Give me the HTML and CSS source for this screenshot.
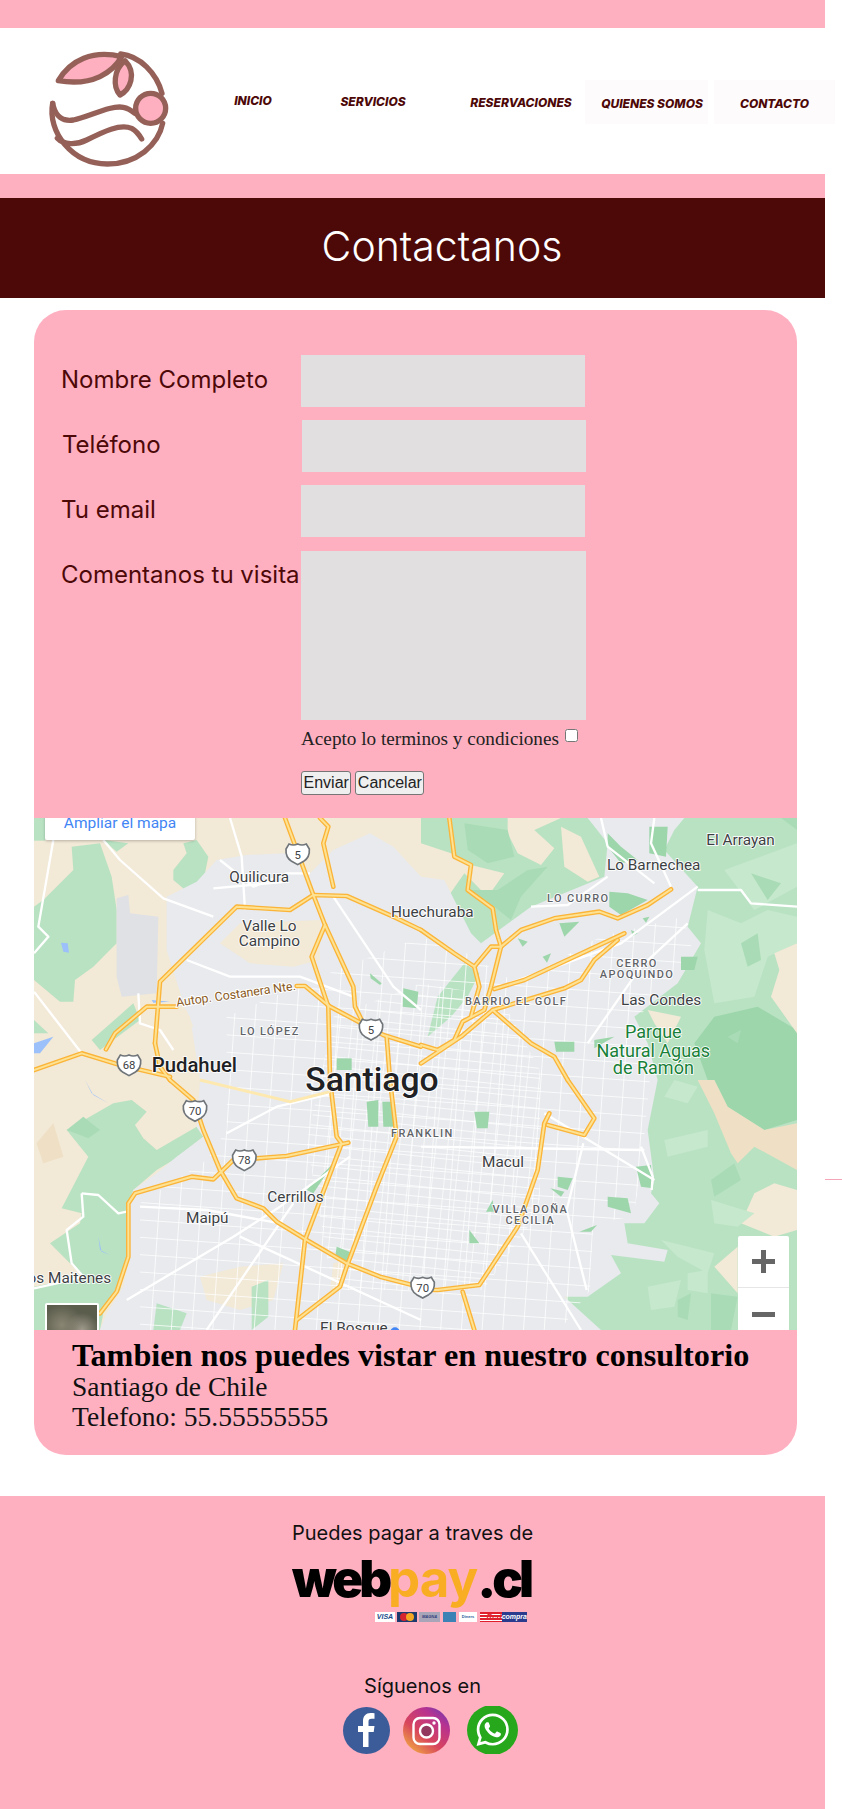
FILE: index.html
```html
<!DOCTYPE html>
<html>
<head>
    <title>Contactanos</title>
    <link rel="stylesheet" href="styles.css">
</head>
<body>
    <div class="page">
        <div class="band-top"></div>

        <header class="site-header">
            <svg class="logo" viewBox="0 0 480 450">
                <g fill="none" stroke="#956058" stroke-width="16" stroke-linecap="round" stroke-linejoin="round">
                    <path d="M68 220C52 305 125 402 232 402C320 402 385 345 398 280"/>
                    <path d="M272 72C330 78 380 130 396 190"/>
                    <path d="M85 152C120 90 190 58 275 80C250 125 190 170 85 152Z" fill="#feb0c1"/>
                    <path d="M285 92C250 120 248 170 270 195C300 180 322 130 285 92Z" fill="#feb0c1"/>
                    <path d="M68 220C75 260 100 275 130 270C180 260 240 225 280 232C295 235 305 242 315 250"/>
                    <path d="M82 325C100 345 140 345 170 330C220 305 270 280 305 295C320 303 328 315 335 327"/>
                    <circle cx="362" cy="235" r="45" fill="#feb0c1"/>
                </g>
            </svg>
            <nav class="main-nav">
                <a class="nav-link nav-inicio" href="#">INICIO</a>
                <a class="nav-link nav-servicios" href="#">SERVICIOS</a>
                <a class="nav-link nav-reservas" href="#">RESERVACIONES</a>
                <a class="nav-link nav-quienes" href="#">QUIENES SOMOS</a>
                <a class="nav-link nav-contacto" href="#">CONTACTO</a>
            </nav>
        </header>

        <div class="band-mid"></div>

        <h1 class="page-title">Contactanos</h1>

        <section class="contact-card">
            <form class="contact-form">
                <label class="field-label" for="nombre">Nombre Completo</label>
                <input class="field" id="nombre" type="text">

                <label class="field-label label-phone" for="fono">Teléfono</label>
                <input class="field field-phone" id="fono" type="text">

                <label class="field-label" for="email">Tu email</label>
                <input class="field" id="email" type="text">

                <label class="field-label" for="visita">Comentanos tu visita</label>
                <textarea class="field field-area" id="visita"></textarea>

                <div class="terms">Acepto lo terminos y condiciones <input class="terms-check" type="checkbox"></div>
                <div class="buttons">
                    <button type="submit">Enviar</button>
                    <button type="reset">Cancelar</button>
                </div>
            </form>

            <div class="map">
                <svg class="map-canvas" viewBox="102 24 2289 1536" preserveAspectRatio="none">
                    <defs>
                        <pattern id="grid-wide" width="62" height="52" patternUnits="userSpaceOnUse" patternTransform="rotate(4)">
                            <path d="M0 0H62M0 0V52" fill="none" stroke="#fff" stroke-width="4.500"/>
                        </pattern>
                        <pattern id="grid-fine" width="36" height="30" patternUnits="userSpaceOnUse" patternTransform="rotate(6)">
                            <path d="M0 0H36M0 0V30" fill="none" stroke="#fff" stroke-width="4"/>
                        </pattern>
                        <path id="shield" d="M-26-30Q-13-24 0-30Q13-24 26-30L35-15Q37 10 18 22L0 32L-18 22Q-37 10-35-15Z"/>

                        <g id="highways">
                            <path d="M102 780L245 730L360 765L510 800"/>
                            <path d="M318 718L345 670L440 590L530 590"/>
                            <path d="M890 528L915 528L990 590L1085 640L1150 675L1263 710"/>
                            <path d="M465 700L480 515L710 290L870 300L940 255L1040 258L1180 320L1263 360"/>
                            <path d="M465 700L480 770L510 810"/>
                            <path d="M855 24L940 255L975 345L1060 530L1065 590L1085 630"/>
                            <path d="M960 24L985 50L970 100L1000 230"/>
                            <path d="M975 345L935 440L985 590L990 810"/>
                            <path d="M1160 680L1170 810"/>
                            <g transform="translate(1263 0)">
                                <path d="M0 360L100 430L160 470L210 410L240 410"/>
                                <path d="M85 24L100 140L150 165L140 240L215 295L225 360L240 410L210 530L190 600L125 635L100 690L50 720L0 705"/>
                                <path d="M160 470L175 530L150 620"/>
                                <path d="M240 410L300 360L400 325L535 305L590 325L680 285L750 238"/>
                                <path d="M220 537L310 510L610 370"/>
                                <path d="M0 760L120 680L215 600L430 535L480 510L520 450L590 390"/>
                                <path d="M215 600L330 700L400 740L440 810"/>
                            </g>
                            <g transform="translate(0 810)">
                                <path d="M510 0L580 60L610 150L660 270L710 355L790 385L830 425L920 480L1040 550L1140 590L1263 622"/>
                                <path d="M990 0L1010 170L1025 190L915 480L885 750"/>
                                <path d="M1170 0L1190 170L1130 320L1040 560L1020 620L890 720"/>
                                <path d="M1045 188L860 228L770 235L700 240L640 298L575 290L405 340L385 370L385 530L350 635L300 700"/>
                            </g>
                            <g transform="translate(1263 810)">
                                <path d="M0 630L50 630L175 615L290 440L350 270L370 130L385 100"/>
                                <path d="M440 0L520 115L490 165L380 135"/>
                                <path d="M125 635L160 750"/>
                            </g>
                        </g>
                    </defs>

                    <rect class="land" x="102" y="24" width="2289" height="1536"/>

                    <!-- west side -->
                    <g class="green">
                        <path d="M102 24H135V92H102Z"/>
                        <path d="M102 290L130 270L220 180L215 110L300 100L335 200L350 300L350 400L280 470L225 510L220 575L180 575L102 510Z"/>
                        <path d="M520 180L560 130L550 100L590 90L625 140L615 190L580 260L520 210Z"/>
                        <path d="M310 90L385 100L350 125Z"/>
                        <path d="M275 690L400 580L420 630L380 660L300 720Z"/>
                        <path d="M102 630L145 670L102 670Z"/>
                        <path d="M340 880L395 870L440 905L405 945L430 985L470 1020L590 950L610 980L520 1050L470 1080L400 1140L385 1210L390 1330L360 1440L310 1510L300 1560H102V1430L250 1400L210 1360L150 1300L240 1240L245 1210L185 1195L265 1040L200 960Z"/>
                    </g>
                    <path class="mid" d="M200 960L250 920L300 960L265 985Z"/>
                    <path class="tan" d="M110 1000L160 940L190 1040L130 1060Z"/>

                    <!-- east side -->
                    <path class="green" d="M1263 24H2391V1560H1700V1000H1263Z"/>
                    <g transform="translate(1263 0)">
                        <path class="land" d="M0 100L90 130L150 165L250 190L200 260L130 190L60 290L0 300Z"/>
                        <path class="land" d="M260 24H420L340 60L400 115L360 165L290 130L260 70Z"/>
                        <path class="land" d="M420 50L480 80L535 200L500 215L430 170Z"/>
                        <path class="mid" d="M130 240L230 240L320 180L380 170L300 260L270 330L220 290Z"/>
                        <path class="mid" d="M130 40L260 60L280 140L200 160L140 120Z"/>
                        <path class="pale" d="M910 180L1128 100V230L1000 300Z"/>
                        <path class="pale" d="M860 300L960 340L1040 300L1128 320V400L1040 440L1000 560L880 580L850 420Z"/>
                        <path class="mid" d="M990 190L1080 220L1040 270Z"/>
                        <path class="mid" d="M960 400L1010 370L1020 450L980 470Z"/>
                        <path class="mid" d="M1080 24H1128V60Z"/>
                        <path class="dark" d="M880 620L1010 590L1128 660V810H860L820 700Z"/>
                        <path class="mid" d="M920 680L960 660L950 700Z"/>
                        <path class="land" d="M1060 430L1128 400V670L1050 560L1075 480Z"/>
                        <path class="land" d="M680 600L780 620L740 700L700 640Z"/>
                    </g>
                    <g transform="translate(1263 810)">
                        <path class="dark" d="M880 0H1128V120L1030 150L920 80Z"/>
                        <path class="tan" d="M830 0H880L920 80L1030 150L1128 130V270L1000 200L950 250L930 220L880 100Z"/>
                        <path class="land" d="M960 430L1000 340L1060 310L1128 330V450L1060 470Z"/>
                        <path class="land" d="M880 560L950 500V640Z"/>
                        <path class="pale" d="M730 180L860 150V200L740 230Z"/>
                        <path class="pale" d="M870 360L1000 400L950 440L880 430Z"/>
                        <path class="pale" d="M720 480L880 520L860 580L770 530Z"/>
                        <path class="pale" d="M800 580L860 570V640L800 630Z"/>
                        <path class="pale" d="M760 0L830 20L800 70L730 50Z"/>
                        <path class="pale" d="M680 620L780 600L760 680L690 690Z"/>
                        <path class="mid" d="M870 300L940 250L960 300L880 350Z"/>
                        <path class="mid" d="M870 640L950 650L930 750H870Z"/>
                        <path class="mid" d="M770 660L810 640L800 720L770 710Z"/>
                    </g>

                    <!-- city -->
                    <path class="urban" d="M500 260L590 215L650 150L740 135L860 130L930 190L1000 120L1110 70L1180 110L1263 200L1333 210L1413 370L1443 400L1593 290L1813 200L1823 100L1763 24H2053L2023 60L1993 120L2093 230L2063 350L2103 400L2033 520L1903 620L1943 700L1973 810L1943 960L1963 1110L1953 1150L1978 1180L1933 1240L1873 1240L1883 1300L2003 1320L1993 1355L1833 1335L1863 1390L1763 1460L1693 1460L1803 1560H300L320 1510L370 1430L390 1330L380 1190L400 1140L470 1090L530 1040L610 980L590 950L600 810L570 620L560 610L500 420Z"/>
                    <path class="land" d="M660 400L720 340L960 330L960 450L880 470L750 460Z"/>
                    <path class="land" d="M490 590L560 600L580 650L500 640Z"/>
                    <path class="airport" d="M350 265L385 255L390 310L475 320L470 550L365 560L350 500Z"/>
                    <path class="land" d="M600 1400L720 1370L850 1360L820 1470L720 1500L620 1470Z"/>
                    <path class="land" d="M1000 1360L1040 1350L1020 1440L990 1440Z"/>
                    <path class="green" d="M755 1430L805 1410L805 1520L755 1560Z"/>
                    <path class="green" d="M470 1480L560 1510L540 1560H460Z"/>
                    <path class="green" d="M1393 460L1438 490L1403 560L1353 620L1283 680L1313 560Z"/>

                    <path fill="url(#grid-wide)" d="M680 620L960 500L1263 380L1400 430L1550 520L1800 380L2050 320L2080 430L1900 640L1950 810L1920 1100L1900 1220L1780 1240L1770 1440L1680 1560H420L420 1180L620 1050L680 960Z"/>
                    <path fill="url(#grid-fine)" d="M1000 620L1263 520L1500 560L1620 780L1620 1200L1450 1440L1000 1440L920 1000Z"/>

                    <!-- parks -->
                    <g class="park">
                        <path d="M1210 535L1255 545L1250 595L1208 590Z"/>
                        <path d="M1010 745L1055 745L1055 780L1010 780Z"/>
                        <path d="M1110 490L1145 520L1140 525L1112 505Z"/>
                        <path d="M1100 875L1135 870L1135 950L1105 950Z"/>
                        <path d="M1147 875L1180 875L1180 950L1150 950Z"/>
                        <path d="M1010 1310L1060 1330L1040 1355L1005 1345Z"/>
                        <path d="M920 1140L1000 1060L940 1150Z"/>
                        <g transform="translate(1263 0)">
                            <path d="M560 70L600 110L650 150L600 160L560 110Z"/>
                            <path d="M685 50H740L735 140L685 130Z"/>
                            <path d="M565 245L620 250L680 270L600 315L565 290Z"/>
                            <path d="M415 340L475 335L430 380Z"/>
                            <path d="M780 440H830L820 480H780Z"/>
                            <path d="M400 695H460V725L405 725Z"/>
                            <path d="M520 690L580 680L520 715Z"/>
                            <path d="M290 385L320 395L305 410Z"/>
                            <path d="M365 440L390 430L378 458Z"/>
                            <path d="M630 360L650 370L635 378Z"/>
                            <path d="M665 325L685 320L675 338Z"/>
                        </g>
                        <g transform="translate(1263 810)">
                            <path d="M160 95H205L200 145H168Z"/>
                            <path d="M410 290L455 295L440 330L410 320Z"/>
                            <path d="M388 325L430 335L420 350Z"/>
                            <path d="M145 450L175 490H145Z"/>
                            <path d="M195 395L215 360L220 395Z"/>
                            <path d="M560 350L620 355L630 400L560 380Z"/>
                            <path d="M475 455L528 435L510 455Z"/>
                            <path d="M645 260L690 255L695 325L660 320Z"/>
                        </g>
                    </g>

                    <!-- water -->
                    <g class="water">
                        <path d="M183 398L203 400L207 428L190 425Z"/>
                        <path d="M102 700L160 680L120 730H102Z"/>
                        <path d="M295 1280L300 1320L330 1335L305 1325Z"/>
                        <path d="M255 810L275 850L325 880L280 855Z"/>
                        <path d="M455 570L510 575L460 578Z"/>
                    </g>

                    <!-- main roads -->
                    <g class="road">
                        <path d="M160 90L115 350L145 380L102 430"/>
                        <path d="M102 545L245 730"/>
                        <path d="M310 90L360 150L490 265L640 320"/>
                        <path d="M415 550L420 640L480 660L520 720"/>
                        <path d="M560 450L690 500L900 500L1060 560"/>
                        <path d="M690 24L725 140L735 300"/>
                        <path d="M660 150L760 230L860 190L930 190"/>
                        <path d="M640 235L860 215"/>
                        <path d="M1000 260L1180 530L1263 600"/>
                        <path d="M245 1150L295 1155L355 1210L380 1205"/>
                        <path d="M245 1150L250 1220L200 1260L215 1360L250 1400"/>
                        <path d="M102 1435L170 1420L250 1400"/>
                        <path d="M380 1470L700 1280L840 1190L1050 1040"/>
                        <path d="M620 1560L880 1180"/>
                        <path d="M720 1280L1263 1530"/>
                        <path d="M680 970L830 890L1000 850"/>
                        <path d="M420 1190L620 1200L840 1240"/>
                        <path d="M1263 1010L1933 1020"/>
                        <path d="M1633 910L1963 1110"/>
                        <path d="M1563 1270L1743 1560"/>
                        <path d="M1750 1000L1700 1200L1760 1440"/>
                        <path d="M1500 530L1863 400L2093 230"/>
                        <path d="M1763 700L1923 470L2063 340"/>
                        <path d="M1593 290L1703 285L1823 200"/>
                        <path d="M1803 24L1823 110L1963 220"/>
                        <path d="M1963 24L1953 100L2013 230"/>
                        <path d="M2093 240L2163 240L2223 240L2253 280L2391 290"/>
                        <path d="M1923 1010L1958 1100L1955 1140"/>
                    </g>

                    <use class="hw-case" href="#highways"/>
                    <use class="hw-core" href="#highways"/>
                    <path class="hw-pale" d="M600 810L870 875L990 845"/>

                    <!-- shields -->
                    <g class="shield">
                        <use href="#shield" x="893" y="132"/>
                        <use href="#shield" x="1113" y="658"/>
                        <use href="#shield" x="387" y="765"/>
                        <use href="#shield" x="585" y="902"/>
                        <use href="#shield" x="733" y="1050"/>
                        <use href="#shield" x="1268" y="1432"/>
                    </g>
                    <g class="shield-num">
                        <text x="893" y="146">5</text>
                        <text x="1113" y="672">5</text>
                        <text x="387" y="778">68</text>
                        <text x="585" y="916">70</text>
                        <text x="733" y="1063">78</text>
                        <text x="1268" y="1446">70</text>
                    </g>

                    <!-- labels -->
                    <g class="place">
                        <text x="688" y="215">Quilicura</text>
                        <text x="808" y="362" class="mid-anchor">Valle Lo</text>
                        <text x="808" y="408" class="mid-anchor">Campino</text>
                        <text x="1173" y="322">Huechuraba</text>
                        <text x="1821" y="180">Lo Barnechea</text>
                        <text x="2119" y="106">El Arrayan</text>
                        <text x="1863" y="585">Las Condes</text>
                        <text x="802" y="1175">Cerrillos</text>
                        <text x="558" y="1240">Maipú</text>
                        <text x="1446" y="1072">Macul</text>
                        <text x="58" y="1420">Los Maitenes</text>
                        <text x="960" y="1570">El Bosque</text>
                    </g>
                    <g class="district">
                        <text x="1641" y="276">LO CURRO</text>
                        <text x="1911" y="470" class="mid-anchor">CERRO</text>
                        <text x="1911" y="504" class="mid-anchor">APOQUINDO</text>
                        <text x="1395" y="586">BARRIO EL GOLF</text>
                        <text x="720" y="676">LO LÓPEZ</text>
                        <text x="1173" y="982">FRANKLIN</text>
                        <text x="1591" y="1208" class="mid-anchor">VILLA DOÑA</text>
                        <text x="1591" y="1243" class="mid-anchor">CECILIA</text>
                    </g>
                    <g class="park-name">
                        <text x="1960" y="685">Parque</text>
                        <text x="1960" y="740">Natural Aguas</text>
                        <text x="1960" y="793">de Ramón</text>
                    </g>
                    <text class="city-small" x="455" y="785">Pudahuel</text>
                    <text class="city-big" x="916" y="843">Santiago</text>
                    <text class="road-name" x="530" y="590" transform="rotate(-8 530 590)">Autop. Costanera Nte.</text>
                    <circle cx="1185" cy="1566" r="14" fill="#4285f4"/>
                </svg>

                <a class="map-link" href="#">Ampliar el mapa</a>
                <div class="map-thumb"></div>
                <div class="zoom-box">
                    <div class="zoom-btn"><span class="zoom-plus"></span></div>
                    <div class="zoom-btn"><span class="zoom-minus"></span></div>
                </div>
            </div>

            <div class="visit">
                <h2>Tambien nos puedes vistar en nuestro consultorio</h2>
                <p>Santiago de Chile</p>
                <p>Telefono: 55.55555555</p>
            </div>
        </section>

        <footer class="site-footer">
            <p class="footer-text">Puedes pagar a traves de</p>
            <div class="webpay">web<span class="webpay-pay">pay</span>.cl</div>
            <div class="pay-cards">
                <span class="card card-visa">VISA</span>
                <span class="card card-master"><i></i><i></i></span>
                <span class="card card-magna">MAGNA</span>
                <span class="card card-amex">AMEX</span>
                <span class="card card-diners">Diners</span>
                <span class="card card-red"><b>Red</b><em>compra</em></span>
            </div>

            <p class="footer-text follow">Síguenos en</p>
            <div class="social">
                <svg class="social-icon" viewBox="0 0 47 47">
                    <circle cx="23.500" cy="23.500" r="23.500" fill="#3b5b99"/>
                    <path fill="#fff" d="M20 40V25h-5v-6h5v-5c0-5 3-8 7.500-8 2 0 3.500.2 4 .3v5.400h-3c-2.300 0-3 1.200-3 3V19h6l-.8 6h-5.200v15z"/>
                </svg>
                <svg class="social-icon" viewBox="0 0 47 47">
                    <defs>
                        <linearGradient id="ig-grad" x1="0.1" y1="1" x2="0.9" y2="0">
                            <stop offset="0" stop-color="#f4b63f"/>
                            <stop offset="0.4" stop-color="#d8455c"/>
                            <stop offset="0.75" stop-color="#b8328f"/>
                            <stop offset="1" stop-color="#6a3bb5"/>
                        </linearGradient>
                    </defs>
                    <circle cx="23.500" cy="23.500" r="23.500" fill="url(#ig-grad)"/>
                    <rect x="10.500" y="11" width="26" height="26" rx="6.500" fill="none" stroke="#fff" stroke-width="2.400"/>
                    <circle cx="23.500" cy="24" r="6.500" fill="#93385f" stroke="#fff" stroke-width="2.400"/>
                    <circle cx="31" cy="16" r="1.700" fill="#fff"/>
                </svg>
                <svg class="social-icon social-wa" viewBox="0 0 51 48">
                    <ellipse cx="25.500" cy="24" rx="25.500" ry="25" fill="#27a81c"/>
                    <path transform="translate(9.500 7.500) scale(1.350)" fill="#fff" d="M17.472 14.382c-.297-.149-1.758-.867-2.030-.967-.273-.099-.471-.148-.670.150-.197.297-.767.966-.940 1.164-.173.199-.347.223-.644.075-.297-.150-1.255-.463-2.390-1.475-.883-.788-1.480-1.761-1.653-2.059-.173-.297-.018-.458.130-.606.134-.133.298-.347.446-.520.149-.174.198-.298.298-.497.099-.198.050-.371-.025-.520-.075-.149-.669-1.612-.916-2.207-.242-.579-.487-.500-.669-.510-.173-.008-.371-.010-.570-.010-.198 0-.520.074-.792.372-.272.297-1.040 1.016-1.040 2.479 0 1.462 1.065 2.875 1.213 3.074.149.198 2.096 3.200 5.077 4.487.709.306 1.262.489 1.694.625.712.227 1.360.195 1.871.118.571-.085 1.758-.719 2.006-1.413.248-.694.248-1.289.173-1.413-.074-.124-.272-.198-.570-.347m-5.421 7.403h-.004a9.870 9.870 0 01-5.031-1.378l-.361-.214-3.741.982.998-3.648-.235-.374a9.860 9.860 0 01-1.510-5.260c.001-5.450 4.436-9.884 9.888-9.884 2.640 0 5.122 1.030 6.988 2.898a9.825 9.825 0 012.893 6.994c-.003 5.450-4.437 9.884-9.885 9.884m8.413-18.297A11.815 11.815 0 0012.050 0C5.495 0 .160 5.335.157 11.892c0 2.096.547 4.142 1.588 5.945L.057 24l6.305-1.654a11.882 11.882 0 005.683 1.448h.005c6.554 0 11.890-5.335 11.893-11.893a11.821 11.821 0 00-3.480-8.413z"/>
                </svg>
            </div>
        </footer>

        <div class="stray-line"></div>
    </div>
</body>
</html>
```

FILE: styles.css
```css
body {
    margin: 0;
    background: white;
    font-family: Inter, "Liberation Sans", sans-serif;
    overflow-x: hidden;
}
.page {
    position: relative;
    width: 825px;
}
.band-top {
    height: 28px;
    background: #feb0c1;
}
.band-mid {
    height: 24px;
    background: #feb0c1;
}

/* header */
.site-header {
    display: flex;
    height: 146px;
    background: white;
}
.logo {
    flex: none;
    width: 160px;
    height: 150px;
    margin: 2px 0 0 30px;
}
.main-nav {
    display: flex;
    align-items: flex-start;
    padding-top: 52px;
}
.nav-link {
    box-sizing: border-box;
    height: 44px;
    text-align: center;
    text-decoration: none;
    color: #4d0808;
    font-size: 12px;
    font-weight: 800;
    font-style: italic;
    line-height: 15px;
}
.nav-inicio {
    width: 126px;
    padding-top: 13px;
}
.nav-servicios {
    width: 114px;
    padding-top: 14px;
}
.nav-reservas {
    width: 128px;
    margin-left: 27px;
    padding-top: 15px;
}
.nav-quienes {
    width: 123px;
    padding: 16px 0 0 11px;
    background: #fefbfc;
}
.nav-contacto {
    flex: none;
    width: 121px;
    margin-left: 6px;
    padding-top: 16px;
    background: #fefbfc;
}

.page-title {
    margin: 0;
    height: 100px;
    padding-left: 59px;
    background: #4d0808;
    color: white;
    font-size: 41px;
    font-weight: 300;
    line-height: 96px;
    text-align: center;
}

/* form card */
.contact-card {
    width: 763px;
    margin: 12px 0 41px 34px;
    background: #feb0c1;
    border-radius: 32px;
    overflow: hidden;
}
.contact-form {
    display: grid;
    grid-template-columns: 240px 285px;
    padding: 45px 0 0 27px;
    height: 508px;
    box-sizing: border-box;
    align-content: start;
}
.field-label {
    margin-top: 10px;
    color: #4d0808;
    font-size: 24px;
    line-height: 29px;
    white-space: nowrap;
}
.label-phone {
    margin-left: 1px;
}
.field {
    box-sizing: border-box;
    display: block;
    width: 284px;
    height: 52px;
    margin-bottom: 13px;
    border: none;
    background: #e2dfe0;
}
.field-phone {
    margin-left: 1px;
}
.field-area {
    width: 285px;
    height: 169px;
    margin-top: 1px;
    margin-bottom: 0;
    resize: none;
}
.terms {
    grid-column: 2;
    margin-top: 7px;
    color: #222;
    font-family: "Liberation Serif", serif;
    font-size: 19.200px;
    line-height: 24px;
    white-space: nowrap;
}
.terms-check {
    margin: 0 0 0 1px;
    vertical-align: 3px;
}
.buttons {
    grid-column: 2;
    margin-top: 20px;
    display: flex;
    gap: 4px;
}
.buttons button {
    height: 24px;
    padding: 0 1.500px;
    border: 1px solid #767676;
    border-radius: 3px;
    background: #efefef;
    color: #222;
    font-family: "Liberation Sans", sans-serif;
    font-size: 16px;
}

/* map */
.map {
    position: relative;
    height: 512px;
    overflow: hidden;
}
.map-canvas {
    display: block;
    width: 763px;
    height: 512px;
}
.land { fill: #f2e9d7; }
.green { fill: #b9e2c3; }
.mid { fill: #a9dcb6; }
.dark { fill: #9dd6ab; }
.pale { fill: #c6e8cd; }
.tan { fill: #efdfc4; }
.urban { fill: #e8eaed; }
.airport { fill: #dfe1e5; }
.park { fill: #9dd6ab; }
.water { fill: #9cc0f9; }
.road {
    fill: none;
    stroke: white;
    stroke-width: 7;
    stroke-linejoin: round;
}
.hw-case {
    fill: none;
    stroke: #fbb437;
    stroke-width: 14;
    stroke-linejoin: round;
    stroke-linecap: round;
}
.hw-core {
    fill: none;
    stroke: #fde293;
    stroke-width: 6;
    stroke-linejoin: round;
    stroke-linecap: round;
}
.hw-pale {
    fill: none;
    stroke: #fde9b0;
    stroke-width: 9;
}
.shield use {
    fill: white;
    stroke: #70757a;
    stroke-width: 5;
}
.shield-num text {
    font-family: Roboto, sans-serif;
    font-size: 34px;
    fill: #3c4043;
    text-anchor: middle;
}
.map-canvas text {
    font-family: Roboto, sans-serif;
}
.place text {
    font-size: 46px;
    fill: #3c4043;
    paint-order: stroke;
    stroke: white;
    stroke-width: 5px;
}
.district text {
    font-size: 33px;
    font-weight: 500;
    letter-spacing: 4px;
    fill: #5f6368;
    paint-order: stroke;
    stroke: white;
    stroke-width: 5px;
}
.mid-anchor {
    text-anchor: middle;
}
.park-name text {
    font-size: 54px;
    text-anchor: middle;
    fill: #188038;
    paint-order: stroke;
    stroke: white;
    stroke-width: 5px;
}
.city-small {
    font-size: 61px;
    font-weight: 500;
    fill: #202124;
    paint-order: stroke;
    stroke: white;
    stroke-width: 5px;
}
.city-big {
    font-size: 101px;
    font-weight: 500;
    fill: #202124;
    paint-order: stroke;
    stroke: white;
    stroke-width: 6px;
}
.road-name {
    font-size: 37px;
    fill: #8a5a24;
    paint-order: stroke;
    stroke: white;
    stroke-width: 6px;
}
.map-link {
    position: absolute;
    left: 11px;
    top: -4px;
    width: 150px;
    height: 26px;
    background: white;
    border-radius: 2px;
    box-shadow: 0 1px 3px rgba(0,0,0,0.25);
    color: #4285f4;
    font-family: Roboto, sans-serif;
    font-size: 15.500px;
    line-height: 18px;
    text-align: center;
    text-decoration: none;
}
.map-thumb {
    position: absolute;
    left: 11px;
    top: 485px;
    box-sizing: border-box;
    width: 54px;
    height: 54px;
    border: 2px solid white;
    border-radius: 2px;
    background:
        radial-gradient(circle at 30% 40%, #8b8674 0, transparent 45%),
        radial-gradient(circle at 70% 50%, #a09a8c 0, transparent 40%),
        #5a5c4c;
}
.zoom-box {
    position: absolute;
    left: 704px;
    top: 418px;
    width: 51px;
    background: white;
    border-radius: 2px;
}
.zoom-btn {
    height: 51px;
    display: flex;
    align-items: center;
    justify-content: center;
}
.zoom-btn + .zoom-btn {
    position: relative;
    height: 60px;
    padding-bottom: 7px;
    box-sizing: border-box;
    border-top: 1px solid #e6e6e6;
    background-clip: padding-box;
}
.zoom-plus {
    width: 23px;
    height: 23px;
    background:
        linear-gradient(#666, #666) center / 23px 5px no-repeat,
        linear-gradient(#666, #666) center / 5px 23px no-repeat;
}
.zoom-minus {
    width: 23px;
    height: 5px;
    background: #666;
}

/* address */
.visit {
    box-sizing: border-box;
    height: 125px;
    padding: 8px 0 0 38px;
    color: #111;
    font-family: "Liberation Serif", serif;
}
.visit h2 {
    margin: 0;
    color: black;
    font-size: 32.200px;
    line-height: 34px;
    white-space: nowrap;
}
.visit p {
    margin: 0;
    font-size: 27.500px;
    line-height: 30px;
}

/* footer */
.site-footer {
    height: 313px;
    background: #feb0c1;
    color: #111;
    overflow: hidden;
}
.footer-text {
    margin: 25px 0 0;
    font-size: 20px;
    line-height: 24px;
    text-align: center;
}
.webpay {
    width: 240px;
    margin: 5px 0 0 292px;
    color: black;
    font-size: 51px;
    font-weight: 900;
    letter-spacing: -4px;
    line-height: 58px;
    white-space: nowrap;
}
.webpay-pay {
    color: #f9ad22;
    font-weight: 700;
    letter-spacing: -1px;
}
.pay-cards {
    display: flex;
    gap: 2px;
    height: 10px;
    margin: 4px 0 0 375px;
}
.card {
    display: block;
    height: 10px;
    overflow: hidden;
    font-family: "Liberation Sans", sans-serif;
    font-size: 6px;
    font-weight: bold;
    font-style: italic;
    line-height: 10px;
    text-align: center;
}
.card-visa {
    width: 20px;
    background: white;
    color: #1a4a8a;
    font-size: 7px;
}
.card-master {
    display: flex;
    align-items: center;
    justify-content: center;
    width: 20px;
    background: #1d3a6e;
}
.card-master i {
    width: 8px;
    height: 8px;
    border-radius: 50%;
    background: #d5232f;
}
.card-master i + i {
    margin-left: -2px;
    background: #f5a623;
}
.card-magna {
    width: 21px;
    background: #a9a5b8;
    color: #2d3a78;
    font-size: 4px;
}
.card-amex {
    width: 13px;
    margin-left: 1px;
    background: #3d82b5;
    color: #3d82b5;
    font-size: 3px;
}
.card-diners {
    width: 18px;
    margin-left: 1px;
    background: white;
    color: #2a5a99;
    font-size: 4px;
    font-style: normal;
}
.card-red {
    display: flex;
    width: 47px;
    margin-left: 1px;
}
.card-red b {
    width: 23px;
    background: repeating-linear-gradient(#e01f2d 0 2px, white 2px 3px);
    color: #e01f2d;
    font-size: 8px;
    text-align: right;
}
.card-red em {
    flex: 1;
    background: #2a3a8c;
    color: white;
    font-size: 7px;
}
.follow {
    margin-top: 52px;
    padding-left: 20px;
}
.social {
    display: flex;
    margin: 9px 0 0 343px;
    gap: 13px;
    align-items: flex-start;
}
.social-icon {
    display: block;
    width: 47px;
    height: 47px;
}
.social-wa {
    width: 51px;
    height: 48px;
    margin: -1px 0 0 4px;
}

.stray-line {
    position: absolute;
    left: 825px;
    top: 1179px;
    width: 17px;
    height: 1px;
    background: #f4a6b8;
}
```
